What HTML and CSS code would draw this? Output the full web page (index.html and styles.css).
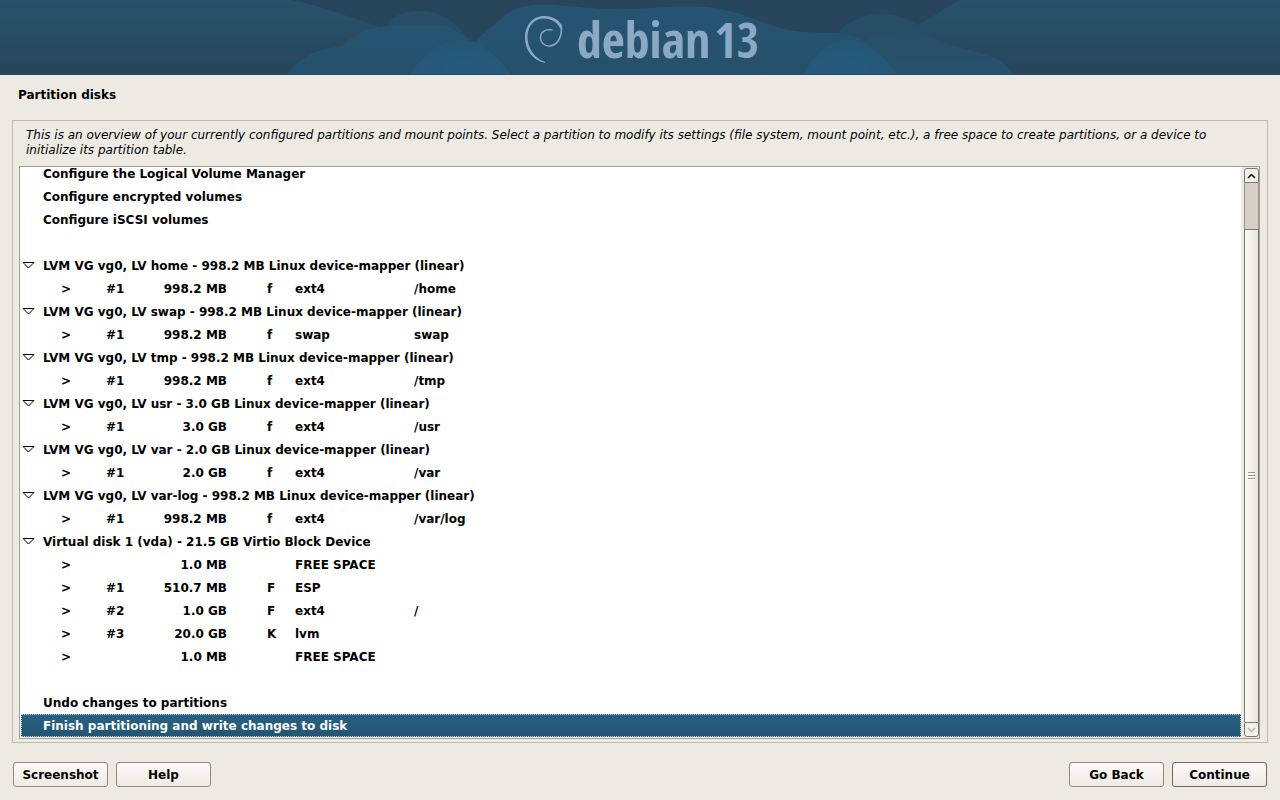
FILE: index.html
```html
<!DOCTYPE html>
<html lang="en">
<head>
<meta charset="utf-8">
<title>Partition disks</title>
<link rel="stylesheet" href="styles.css">
</head>
<body>
<header class="banner">
<svg class="banner-art" viewBox="0 0 1280 75" preserveAspectRatio="xMidYMid slice" aria-hidden="true">
<defs>
<linearGradient id="side" x1="0" y1="0" x2="0" y2="1"><stop offset="0" stop-color="#28526a"/><stop offset="1" stop-color="#27455b"/></linearGradient>
<linearGradient id="hill" x1="0" y1="0" x2="0" y2="1"><stop offset="0" stop-color="#265571"/><stop offset="1" stop-color="#25506b"/></linearGradient>
<radialGradient id="glow" cx=".5" cy=".8" r=".6"><stop offset="0" stop-color="#255a80"/><stop offset="1" stop-color="#255775"/></radialGradient>
<linearGradient id="fade" x1="0" y1="0" x2="0" y2="1"><stop offset="0" stop-color="#284f68"/><stop offset="1" stop-color="#27485f"/></linearGradient>
<linearGradient id="slope" x1="0" y1="0" x2="0" y2="1"><stop offset="0" stop-color="#274e66"/><stop offset="1" stop-color="#27526e"/></linearGradient>
</defs>
<rect width="1280" height="75" fill="#27465c"/>
<path d="M388 22C402 8 430 8 446 18C462 28 468 40 482 48V75H388Z" fill="url(#fade)"/>
<path d="M840 30C856 18 866 14 884 14C906 14 918 26 934 36L980 75H830Z" fill="url(#fade)"/>
<path d="M0 0H290C320 5 350 18 378 26L420 75H0Z" fill="url(#side)"/>
<path d="M1280 0H960C944 8 930 20 915 26C930 44 960 47 982 54C1000 59 1008 67 1014 75H1280Z" fill="url(#side)"/>
<path d="M286 75C300 58 312 50 342 46C358 32 372 26 394 26H444C460 30 470 42 482 50L500 75Z" fill="url(#hill)"/>
<path d="M870 36C890 36 904 32 917 26C932 42 960 47 980 53C1000 58 1008 67 1014 75H850Z" fill="url(#slope)"/>
<path d="M462 75C462 55 474 42 488 30C500 20 510 8 528 6C545 4 553 5 565 6C590 8 610 10 635 9C670 7 700 4 725 10C752 16 770 28 795 31C815 34 830 31 850 35C874 42 888 58 898 75Z" fill="url(#hill)"/>
<path d="M410 75C426 50 444 40 462 40C482 40 498 58 512 75Z" fill="url(#glow)"/>
<path d="M803 75C814 54 830 42 845 40C870 40 884 58 898 75Z" fill="url(#glow)"/>
<path d="M0 74.500H1280" stroke="#2a4b61" stroke-opacity=".6"/>
<path d="M545 63C532 60 525 49 525 38C525 25 533 16 544 16C553 16 560 20 562 27L562.500 30L560 28C557 22 551 18.500 544 18.500C534 18.500 528 26 527.500 36C527 47 534 58 545 62Z" fill="#8ba9c5"/>
<path d="M561 25C563 37 557 46 549 46C544 46 540.500 42 540.500 38C540.500 32 545 29 552 30" fill="none" stroke="#8ba9c5" stroke-width="1.500" stroke-linecap="round"/>
</svg>
<span class="logo"><span>debian</span><span class="version">13</span></span>
</header>
<main class="content">
<h1 class="title">Partition disks</h1>
<section class="panel">
<p class="intro">This is an overview of your currently configured partitions and mount points. Select a partition to modify its settings (file system, mount point, etc.), a free space to create partitions, or a device to initialize its partition table.</p>
<div class="list">
<div class="view">
<table class="tree">
<colgroup><col class="c-tree"><col class="c-mark"><col class="c-num"><col class="c-size"><col class="c-flag"><col class="c-type"><col></colgroup>
<tbody>
<tr><td></td><td colspan="6">Configure the Logical Volume Manager</td></tr>
<tr><td></td><td colspan="6">Configure encrypted volumes</td></tr>
<tr><td></td><td colspan="6">Configure iSCSI volumes</td></tr>
<tr><td colspan="7"></td></tr>
<tr><td><svg class="expander" viewBox="0 0 13 8"><path d="M1 1.500H12L6.500 7Z"/></svg></td><td colspan="6">LVM VG vg0, LV home - 998.2 MB Linux device-mapper (linear)</td></tr>
<tr><td></td><td class="mark">&gt;</td><td>#1</td><td class="size">998.2 MB</td><td class="flag">f</td><td>ext4</td><td>/home</td></tr>
<tr><td><svg class="expander" viewBox="0 0 13 8"><path d="M1 1.500H12L6.500 7Z"/></svg></td><td colspan="6">LVM VG vg0, LV swap - 998.2 MB Linux device-mapper (linear)</td></tr>
<tr><td></td><td class="mark">&gt;</td><td>#1</td><td class="size">998.2 MB</td><td class="flag">f</td><td>swap</td><td>swap</td></tr>
<tr><td><svg class="expander" viewBox="0 0 13 8"><path d="M1 1.500H12L6.500 7Z"/></svg></td><td colspan="6">LVM VG vg0, LV tmp - 998.2 MB Linux device-mapper (linear)</td></tr>
<tr><td></td><td class="mark">&gt;</td><td>#1</td><td class="size">998.2 MB</td><td class="flag">f</td><td>ext4</td><td>/tmp</td></tr>
<tr><td><svg class="expander" viewBox="0 0 13 8"><path d="M1 1.500H12L6.500 7Z"/></svg></td><td colspan="6">LVM VG vg0, LV usr - 3.0 GB Linux device-mapper (linear)</td></tr>
<tr><td></td><td class="mark">&gt;</td><td>#1</td><td class="size">3.0 GB</td><td class="flag">f</td><td>ext4</td><td>/usr</td></tr>
<tr><td><svg class="expander" viewBox="0 0 13 8"><path d="M1 1.500H12L6.500 7Z"/></svg></td><td colspan="6">LVM VG vg0, LV var - 2.0 GB Linux device-mapper (linear)</td></tr>
<tr><td></td><td class="mark">&gt;</td><td>#1</td><td class="size">2.0 GB</td><td class="flag">f</td><td>ext4</td><td>/var</td></tr>
<tr><td><svg class="expander" viewBox="0 0 13 8"><path d="M1 1.500H12L6.500 7Z"/></svg></td><td colspan="6">LVM VG vg0, LV var-log - 998.2 MB Linux device-mapper (linear)</td></tr>
<tr><td></td><td class="mark">&gt;</td><td>#1</td><td class="size">998.2 MB</td><td class="flag">f</td><td>ext4</td><td>/var/log</td></tr>
<tr><td><svg class="expander" viewBox="0 0 13 8"><path d="M1 1.500H12L6.500 7Z"/></svg></td><td colspan="6">Virtual disk 1 (vda) - 21.5 GB Virtio Block Device</td></tr>
<tr><td></td><td class="mark">&gt;</td><td></td><td class="size">1.0 MB</td><td></td><td>FREE SPACE</td><td></td></tr>
<tr><td></td><td class="mark">&gt;</td><td>#1</td><td class="size">510.7 MB</td><td class="flag">F</td><td>ESP</td><td></td></tr>
<tr><td></td><td class="mark">&gt;</td><td>#2</td><td class="size">1.0 GB</td><td class="flag">F</td><td>ext4</td><td>/</td></tr>
<tr><td></td><td class="mark">&gt;</td><td>#3</td><td class="size">20.0 GB</td><td class="flag">K</td><td>lvm</td><td></td></tr>
<tr><td></td><td class="mark">&gt;</td><td></td><td class="size">1.0 MB</td><td></td><td>FREE SPACE</td><td></td></tr>
<tr><td colspan="7"></td></tr>
<tr><td></td><td colspan="6">Undo changes to partitions</td></tr>
<tr class="selected"><td></td><td colspan="6">Finish partitioning and write changes to disk</td></tr>
</tbody>
</table>
</div>
<div class="scrollbar">
<button class="step up" type="button" aria-label="Scroll up"><svg viewBox="0 0 9 6"><path d="M1 5L4.500 1.500L8 5"/></svg></button>
<div class="trough"></div>
<div class="thumb"><i></i><i></i><i></i></div>
<button class="step down" type="button" aria-label="Scroll down" disabled><svg viewBox="0 0 9 6"><path d="M1 1L4.500 4.500L8 1"/></svg></button>
</div>
</div>
</section>
<footer class="actions">
<button class="btn" type="button">Screenshot</button>
<button class="btn" type="button">Help</button>
<span class="spacer"></span>
<button class="btn" type="button">Go Back</button>
<button class="btn strong" type="button">Continue</button>
</footer>
</main>
</body>
</html>
```
FILE: styles.css
```css
* { box-sizing: border-box; }
body {
  margin: 0;
  height: 100vh;
  display: flex;
  flex-direction: column;
  background: #edeae3;
  color: #000;
  font: 12px/15px "DejaVu Sans", sans-serif;
}
.banner { flex: none; position: relative; background: #27465c; }
.banner-art { display: block; width: 100%; height: 75px; }
.logo {
  position: absolute;
  top: 0;
  left: 50%;
  margin-left: -63px;
  display: flex;
  align-items: baseline;
  gap: 4px;
  color: #8ba9c5;
  font: 700 50px/78px "Liberation Sans Narrow", "Open Sans Condensed", "Lato", sans-serif;
}
.version { font-size: 48px; }
.content {
  flex: 1;
  min-height: 0;
  display: flex;
  flex-direction: column;
  padding: 13px 12px;
}
.title { margin: 0 6px 17px; font-size: 12px; line-height: 15px; }
.panel {
  flex: 1;
  min-height: 0;
  display: flex;
  flex-direction: column;
  padding: 7px 7px 3px 6px;
  border: 1px solid #bdb9ae;
}
.intro { margin: 0 7px 8px; font-style: italic; }
.list {
  flex: 1;
  min-height: 0;
  display: flex;
  border: 1px solid #a39f92;
  background: #edeae3;
}
.view {
  flex: 1;
  min-width: 0;
  display: flex;
  flex-direction: column;
  justify-content: flex-end;
  overflow: hidden;
  padding: 0 0 1px 1px;
  background: #fff;
}
.tree {
  flex: none;
  width: 100%;
  table-layout: fixed;
  border-collapse: collapse;
  font-weight: 700;
}
.tree tr { height: 23px; }
.tree td { padding: 2px 0 0; white-space: nowrap; }
.c-tree { width: 22px; }
.c-mark { width: 63px; }
.c-num { width: 40px; }
.c-size { width: 81px; }
.c-flag { width: 68px; }
.c-type { width: 119px; }
.tree .mark { padding-left: 18px; }
.tree .size { text-align: right; }
.tree .flag { padding-left: 40px; }
.expander { display: block; width: 13px; height: 8px; margin: 0 0 4px 1px; fill: #fff; stroke: #000; }
.selected {
  background: linear-gradient(#2a6180, #225573);
  color: #fff;
  outline: 1px dotted #b5cbd8;
  outline-offset: -1px;
}
.scrollbar {
  flex: none;
  width: 18px;
  display: flex;
  flex-direction: column;
  padding: 1px 0 1px 3px;
}
.step {
  height: 15px;
  display: flex;
  align-items: center;
  justify-content: center;
  padding: 0;
  border: 1px solid #7d786c;
  background: #f3f0ea;
}
.step svg { width: 9px; height: 6px; fill: none; stroke: #000; stroke-width: 1.5; }
.step:disabled svg { stroke: #bab6ac; }
.up { border-radius: 3px 3px 0 0; }
.down { border-radius: 0 0 3px 3px; }
.trough { flex: 46; background: #d6cec7; border: solid #9b958a; border-width: 0 1px; }
.thumb {
  flex: 493;
  display: flex;
  flex-direction: column;
  align-items: center;
  justify-content: center;
  gap: 1px;
  border: 1px solid #7d786c;
  border-bottom: 0;
  background: linear-gradient(90deg, #faf8f5, #e8e3dc);
}
.thumb i { width: 7px; height: 2px; border-top: 1px solid #99958a; background: #fff; }
.actions { flex: none; display: flex; gap: 8px; margin-top: 19px; padding: 0 1px; }
.spacer { flex: 1; }
.btn {
  width: 95px;
  height: 25px;
  padding: 1px 0 0;
  border: 1px solid #8d897d;
  border-radius: 3px;
  background: linear-gradient(#fbfaf8, #efebe5);
  color: #000;
  font: 700 12px/15px "DejaVu Sans", sans-serif;
}
.strong { border-color: #6d695f; }
```
